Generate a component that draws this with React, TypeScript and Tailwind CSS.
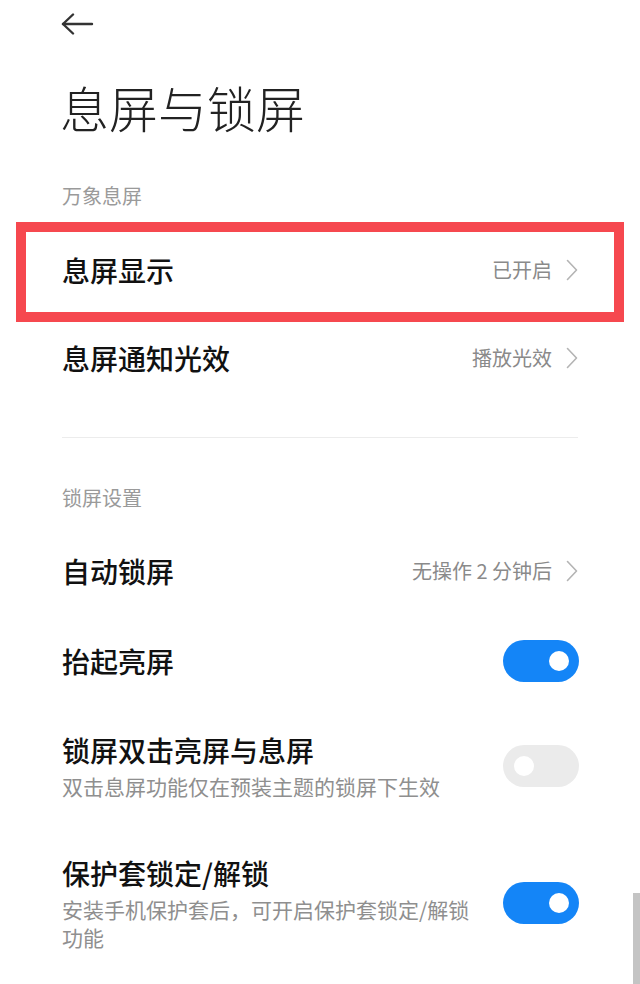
import React from "react";

function BackArrow() {
  return (
    <svg width="33" height="22" viewBox="0 0 33 22" fill="none" stroke="#333" strokeWidth="2.4"
      strokeLinecap="round" strokeLinejoin="round">
      <line x1="2" y1="11" x2="31" y2="11" />
      <polyline points="12,1.5 2,11 12,20.5" />
    </svg>
  );
}

function Chevron() {
  return (
    <svg width="12" height="22" viewBox="0 0 12 22" fill="none" stroke="#b4b4b4" strokeWidth="1.6"
      strokeLinecap="round" strokeLinejoin="round">
      <polyline points="1.5,1.5 10.5,11 1.5,20.5" />
    </svg>
  );
}

function Toggle({ on }: { on: boolean }) {
  return (
    <div
      className={
        on
          ? "flex h-[42px] w-[76px] shrink-0 items-center justify-end rounded-full bg-[#1485f7] pr-[10px]"
          : "flex h-[42px] w-[76px] shrink-0 items-center justify-start rounded-full bg-[#ebebeb] pl-[11px]"
      }
    >
      <div className="h-[20px] w-[20px] rounded-full bg-white" />
    </div>
  );
}

function LinkRow({ title, value }: { title: string; value: string }) {
  return (
    <div className="flex h-full items-center justify-between">
      <span className="text-[28px] font-medium leading-none text-[#111]">{title}</span>
      <div className="flex items-center gap-[14px]">
        <span className="text-[20px] leading-none text-[#8a8a8a]">{value}</span>
        <Chevron />
      </div>
    </div>
  );
}

function SectionLabel({ children }: { children: React.ReactNode }) {
  return (
    <div className="flex h-[40px] items-center px-[62px] text-[20px] text-[#9a9a9a]">{children}</div>
  );
}

export default function App() {
  return (
    <div className="relative h-[984px] w-[640px] overflow-hidden bg-white font-['Noto_Sans_CJK_SC',sans-serif]">
      {/* header */}
      <div className="h-[48px] pl-[61px] pt-[13px]">
        <BackArrow />
      </div>
      <div className="flex h-[116px] items-center px-[60px]">
        <h1 className="text-[49px] font-extralight leading-none text-[#222]">息屏与锁屏</h1>
      </div>

      <div className="mt-[12px]">
        <SectionLabel>万象息屏</SectionLabel>
      </div>

      {/* highlighted row */}
      <div className="mx-[16px] mt-[6px] h-[100px] border-[10px] border-[#f6484f] px-[36px] pb-[4px]">
        <LinkRow title="息屏显示" value="已开启" />
      </div>

      <div className="h-[72px] px-[62px]">
        <LinkRow title="息屏通知光效" value="播放光效" />
      </div>

      <div className="mx-[62px] mt-[43px] h-px bg-[#ececec]" />

      <div className="mt-[40px]">
        <SectionLabel>锁屏设置</SectionLabel>
      </div>

      <div className="mt-[13px] h-[80px] px-[62px]">
        <LinkRow title="自动锁屏" value="无操作 2 分钟后" />
      </div>

      <div className="mt-[10px] flex h-[80px] items-center justify-between pl-[62px] pr-[61px]">
        <span className="text-[28px] font-medium leading-none text-[#111]">抬起亮屏</span>
        <Toggle on />
      </div>

      <div className="mt-[31px] flex items-center gap-[16px] pl-[62px] pr-[61px]">
        <div className="min-w-0 flex-1">
          <div className="text-[28px] font-medium leading-[36px] text-[#111]">锁屏双击亮屏与息屏</div>
          <div className="mt-[4px] text-[21px] leading-[28px] text-[#8f8f8f]">
            双击息屏功能仅在预装主题的锁屏下生效
          </div>
        </div>
        <Toggle on={false} />
      </div>

      <div className="mt-[55px] flex items-center gap-[16px] pl-[62px] pr-[61px]">
        <div className="min-w-0 flex-1">
          <div className="text-[28px] font-medium leading-[36px] text-[#111]">保护套锁定/解锁</div>
          <div className="mt-[4px] text-[21px] leading-[28px] text-[#8f8f8f]">
            安装手机保护套后，可开启保护套锁定/解锁功能
          </div>
        </div>
        <Toggle on />
      </div>

      {/* scroll indicator */}
      <div className="absolute bottom-0 right-0 h-[91px] w-[7px] bg-[#c4c4c4]" />
    </div>
  );
}
